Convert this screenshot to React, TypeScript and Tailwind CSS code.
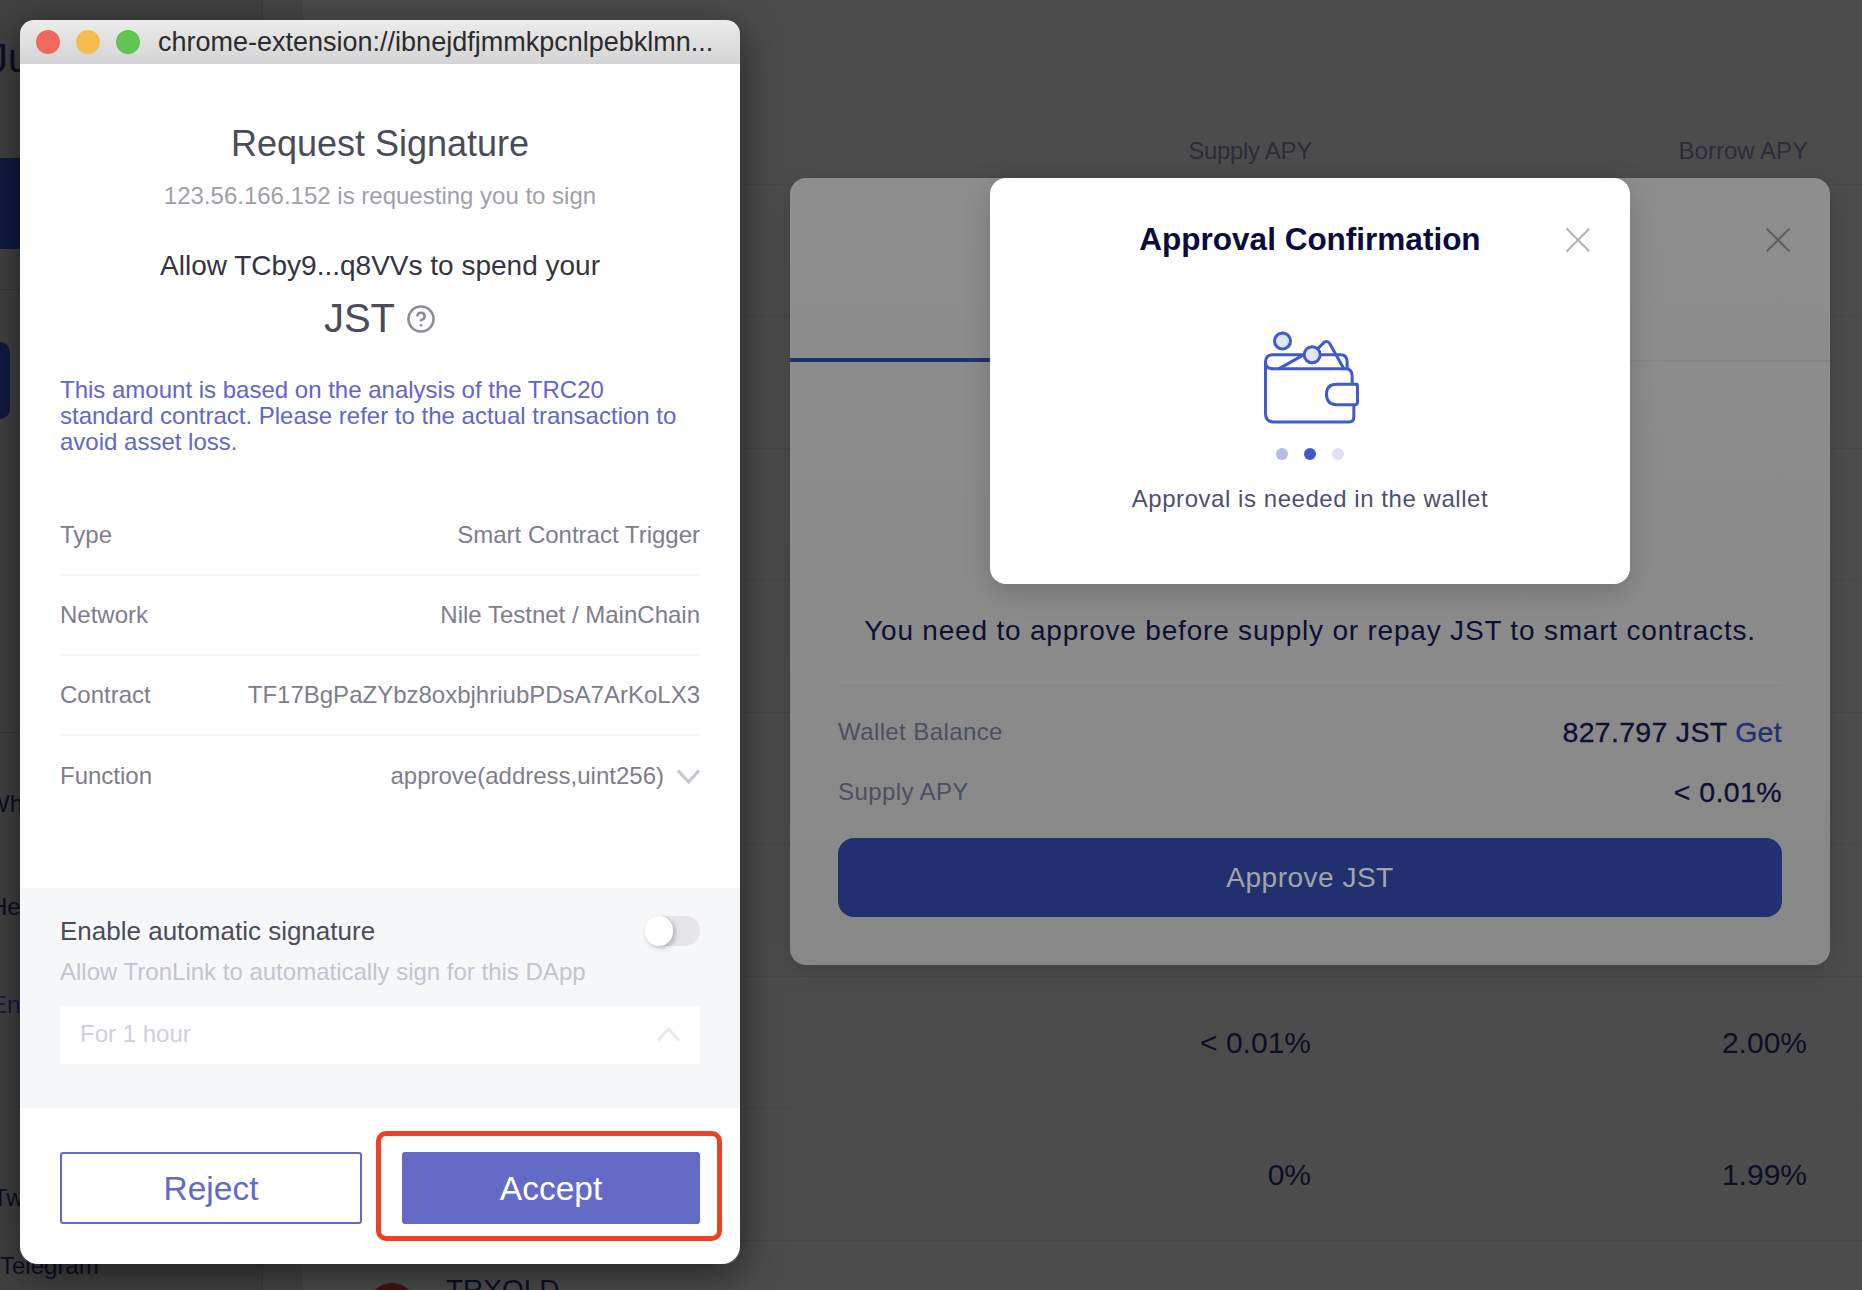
import React from 'react';
import { CircleHelp } from 'lucide-react';

const font = { fontFamily: '"Liberation Sans", Arial, sans-serif' };

function CloseIcon({ className }: { className: string }) {
  return (
    <svg width="26" height="26" viewBox="0 0 26 26" className={className} fill="none" stroke="currentColor" strokeWidth="2">
      <path d="M1.5 1.5 24.5 24.5M24.5 1.5 1.5 24.5" />
    </svg>
  );
}

function WalletIcon() {
  return (
    <svg width="107" height="100" viewBox="170 50 320 300" fill="none" stroke="#3f5ad0" strokeWidth="9" strokeLinejoin="round" strokeLinecap="round">
      <path d="M195 155V310Q195 335 222 335H445Q460 335 460 320V285" />
      <path d="M215 175H435Q455 175 455 197V222" />
      <path d="M215 175Q195 175 195 155Q195 133 217 133H420Q440 133 440 155V172" />
      <path d="M236 175 312 132M352 115 372 95Q381 91 388 100L430 175" />
      <path d="M470 222H408Q378 222 378 252Q378 283 408 283H462Q471 283 471 274V230Q471 222 462 222" fill="#fff" />
      <circle cx="246" cy="92" r="24" fill="#e1e5f8" />
      <circle cx="335" cy="133" r="24" fill="#e1e5f8" />
    </svg>
  );
}

const rows = [
  { label: 'Type', value: 'Smart Contract Trigger' },
  { label: 'Network', value: 'Nile Testnet / MainChain' },
  { label: 'Contract', value: 'TF17BgPaZYbz8oxbjhriubPDsA7ArKoLX3' },
];

const tableRows = [
  { supply: '', borrow: '' },
  { supply: '', borrow: '' },
  { supply: '', borrow: '' },
  { supply: '', borrow: '' },
  { supply: '', borrow: '' },
  { supply: '', borrow: '' },
  { supply: '< 0.01%', borrow: '2.00%' },
  { supply: '0%', borrow: '1.99%' },
];

function Sidebar() {
  return (
    <div className="w-[263px] h-full shrink-0 border-r border-[#3a3a3a] bg-[#424242] text-[#0d0f26] overflow-hidden">
      <div className="h-[158px] pt-[36px] text-[40px] leading-[44px] -ml-[12px]">Just</div>
      <div className="h-[91px] bg-[#111a42]" />
      <div className="h-[41px] border-b border-[#383838]" />
      <div className="mt-[52px] w-[10px] h-[77px] rounded-r-[10px] bg-[#111a42]" />
      <div className="mt-[313px] h-[1px] bg-[#383838]" />
      <div className="mt-[55px] text-[24px] leading-[32px] -ml-[13px] whitespace-nowrap">What is JUST</div>
      <div className="mt-[71px] text-[24px] leading-[32px] -ml-[10px]">Help</div>
      <div className="mt-[66px] text-[24px] leading-[32px] -ml-[9px] text-[#1c1548]">English</div>
      <div className="mt-[161px] text-[24px] leading-[32px] -ml-[7px]">Twitter</div>
      <div className="mt-[36px] text-[24px] leading-[32px]">Telegram</div>
    </div>
  );
}

function MainTable() {
  return (
    <div className="flex-1 h-full ml-[40px] bg-[#4c4c4c] text-[#0d0f26] overflow-hidden">
      <div className="h-[185px] border-b border-[#464646] flex items-end justify-end pr-[54px] pb-[19px] text-[24px] leading-[28px] text-[#2c2d3a]">
        <div className="tracking-[-0.3px]">Supply APY</div>
        <div className="w-[496px] text-right">Borrow APY</div>
      </div>
      {tableRows.map((row, i) => (
        <div key={i} className="h-[132px] border-b border-[#464646] flex items-center justify-end pr-[55px] text-[30px]">
          <div>{row.supply}</div>
          <div className="w-[496px] text-right">{row.borrow}</div>
        </div>
      ))}
      <div className="flex items-start pl-[65px] pt-[33px] gap-[30px]">
        <div className="w-[48px] h-[48px] mt-[9px] rounded-full bg-[#42150d]" />
        <div className="text-[28px] leading-[32px] text-[#0d0f26]">TRXOLD</div>
      </div>
    </div>
  );
}

function SignWindow() {
  return (
    <div className="absolute left-[20px] top-[20px] w-[720px] h-[1244px] flex flex-col rounded-[14px] shadow-[0_10px_40px_rgba(0,0,0,0.55)]">
      <div className="h-[44px] shrink-0 rounded-t-[14px] bg-gradient-to-b from-[#ececec] to-[#d4d3d5] flex items-center pl-[16px] gap-[16px]">
        <div className="w-[24px] h-[24px] rounded-full bg-[#ee6a5f]" />
        <div className="w-[24px] h-[24px] rounded-full bg-[#f5bd4f]" />
        <div className="w-[24px] h-[24px] rounded-full bg-[#61c454]" />
        <div className="ml-[2px] text-[27px] leading-[36px] text-[#2b2b2b] whitespace-nowrap">chrome-extension://ibnejdfjmmkpcnlpebklmn...</div>
      </div>
      <div className="flex-1 bg-white rounded-b-[18px] flex flex-col">
        <div className="pt-[58px] text-center text-[36px] leading-[44px] text-[#4a4c5a]">Request Signature</div>
        <div className="mt-[14px] text-center text-[24px] leading-[32px] text-[#a0a0aa]">123.56.166.152 is requesting you to sign</div>
        <div className="mt-[36px] text-center text-[28px] leading-[36px] text-[#33343f]">Allow TCby9...q8VVs to spend your</div>
        <div className="mt-[10px] h-[48px] flex items-center justify-center gap-[11px] text-[40px] text-[#4a4c5a]">
          JST
          <CircleHelp size={30} strokeWidth={2.1} className="text-[#8d8d98] mt-[2px]" />
        </div>
        <div className="mt-[35px] mx-[40px] text-[24px] leading-[26px] text-[#6166c8]">
          This amount is based on the analysis of the TRC20 standard contract. Please refer to the actual transaction to avoid asset loss.
        </div>
        <div className="mt-[41px] mx-[40px]">
          {rows.map((r) => (
            <div key={r.label} className="h-[80px] flex items-center justify-between border-b-2 border-[#f5f5f7] text-[24px] text-[#7d7e8c]">
              <span>{r.label}</span>
              <span>{r.value}</span>
            </div>
          ))}
          <div className="h-[80px] flex items-center justify-between text-[24px] text-[#7d7e8c]">
            <span>Function</span>
            <span className="flex items-center gap-[13px]">
              approve(address,uint256)
              <svg width="23" height="15" viewBox="0 0 23 15" fill="none" stroke="#c4c5cf" strokeWidth="3">
                <path d="M1 1.5 11.5 13 22 1.5" />
              </svg>
            </span>
          </div>
        </div>
        <div className="mt-[72px] h-[220px] bg-[#f6f7f9] px-[40px] pt-[27px]">
          <div className="flex items-center justify-between">
            <span className="text-[26px] leading-[32px] text-[#4a4c5a]">Enable automatic signature</span>
            <div className="relative w-[55px] h-[30px] rounded-full bg-[#e6e6ea]">
              <div className="absolute left-0 top-0 w-[28px] h-[30px] rounded-full bg-white shadow-[2px_2px_5px_rgba(0,0,0,0.25)]" />
            </div>
          </div>
          <div className="mt-[9px] text-[24px] leading-[32px] text-[#c3c4cf]">Allow TronLink to automatically sign for this DApp</div>
          <div className="mt-[18px] h-[58px] bg-white flex items-center justify-between pl-[20px] pr-[20px] pb-[2px] text-[24px] text-[#cfd0d8]">
            <span>For 1 hour</span>
            <svg width="23" height="15" viewBox="0 0 23 15" fill="none" stroke="#e8e8ee" strokeWidth="3">
              <path d="M1 13.5 11.5 2 22 13.5" />
            </svg>
          </div>
        </div>
        <div className="mt-[44px] mx-[40px] flex justify-between">
          <button className="w-[302px] h-[72px] pt-[2px] border-2 border-[#6469c8] rounded-[3px] text-[33.5px] text-[#6469c8] bg-white">Reject</button>
          <div className="relative">
            <button className="w-[298px] h-[72px] pt-[2px] rounded-[3px] text-[33.5px] text-white bg-[#646bc6]">Accept</button>
            <div className="absolute left-[-26px] top-[-21px] w-[346px] h-[110px] border-[5px] border-[#ee4123] rounded-[10px]" />
          </div>
        </div>
      </div>
    </div>
  );
}

function SupplyModal() {
  return (
    <div className="absolute left-[790px] top-[178px] w-[1040px] h-[787px] rounded-[16px] bg-gradient-to-b from-[#8e8e8e] to-[#888888] shadow-[0_8px_24px_rgba(0,0,0,0.15)]">
      <CloseIcon className="absolute right-[39px] top-[49px] text-[#5f5f5f]" />
      <div className="h-[184px] border-b-2 border-[#858585] flex items-end">
        <div className="h-full w-[220px] border-b-4 border-[#233070] -mb-[2px]" />
      </div>
      <div className="mt-[251px] text-center text-[28px] leading-[36px] tracking-[0.8px] text-[#0d0f33]">
        You need to approve before supply or repay JST to smart contracts.
      </div>
      <div className="mx-[48px] mt-[36px] border-t border-[#858585] pt-[26px] flex items-center justify-between text-[24px] leading-[40px] tracking-[0.4px] text-[#4d4f62]">
        <span>Wallet Balance</span>
        <span className="text-[28.5px] tracking-[0.3px] text-[#0d0f33] [-webkit-text-stroke:0.3px]">827.797 JST <span className="text-[#233070]">Get</span></span>
      </div>
      <div className="mx-[48px] mt-[20px] flex items-center justify-between text-[24px] leading-[40px] tracking-[0.4px] text-[#4d4f62]">
        <span>Supply APY</span>
        <span className="text-[28.5px] text-[#0d0f33] [-webkit-text-stroke:0.3px]">&lt; 0.01%</span>
      </div>
      <button className="mt-[26px] mx-[48px] w-[944px] h-[79px] rounded-[16px] bg-[#233070] text-[28px] tracking-[0.5px] text-[#a3a5ab]">Approve JST</button>
    </div>
  );
}

function ApprovalModal() {
  return (
    <div className="absolute left-[990px] top-[178px] w-[640px] h-[406px] rounded-[16px] bg-white shadow-[0_8px_30px_rgba(0,0,0,0.18)] flex flex-col items-center">
      <CloseIcon className="absolute right-[39px] top-[49px] text-[#b3b3b3]" />
      <div className="mt-[41px] text-[31.5px] leading-[40px] font-bold text-[#0a0c3e]">Approval Confirmation</div>
      <div className="mt-[68px]">
        <WalletIcon />
      </div>
      <div className="mt-[21px] flex gap-[16px]">
        <div className="w-[12px] h-[12px] rounded-full bg-[#b4bdea]" />
        <div className="w-[12px] h-[12px] rounded-full bg-[#3f5ad0]" />
        <div className="w-[12px] h-[12px] rounded-full bg-[#dde1f6]" />
      </div>
      <div className="mt-[23px] text-[24px] leading-[32px] tracking-[0.55px] text-[#4f5070]">Approval is needed in the wallet</div>
    </div>
  );
}

export default function App() {
  return (
    <div className="relative w-[1862px] h-[1290px] overflow-hidden flex bg-[#464646]" style={font}>
      <Sidebar />
      <MainTable />
      <SupplyModal />
      <ApprovalModal />
      <SignWindow />
    </div>
  );
}
